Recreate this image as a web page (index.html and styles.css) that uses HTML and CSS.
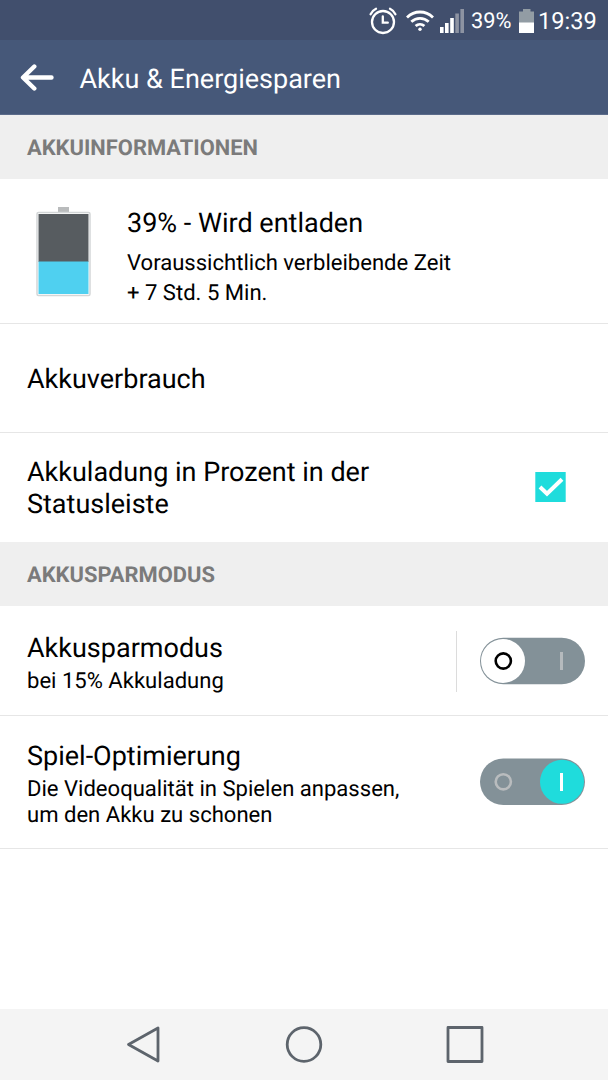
FILE: index.html
```html
<!DOCTYPE html>
<html lang="de">
<head>
    <meta charset="UTF-8">
    <meta name="viewport" content="width=device-width, initial-scale=1.0">
    <title>Akku &amp; Energiesparen</title>
    <link rel="stylesheet" href="styles.css">
</head>
<body>
    <div class="status-bar">
        <svg class="icon-alarm" width="28" height="28" viewBox="0 0 28 28" fill="none" stroke="#fff" stroke-width="2.3" stroke-linecap="round">
            <circle cx="14" cy="15" r="11"/>
            <path d="M13.8 9.5v6.2h5M1.6 7.2C2.8 4.8 4.6 2.9 7 1.8M21 1.8c2.4 1.1 4.2 3 5.4 5.4"/>
        </svg>
        <svg class="icon-wifi" width="28" height="22" viewBox="0 0 28 22" fill="none" stroke="#fff" stroke-width="2.8">
            <path d="M1 7.4C8.5.2 19.5.2 27 7.4M5.3 11.8c5-4.6 12.4-4.6 17.4 0M9.6 16c2.5-2.2 6.3-2.2 8.8 0"/>
            <circle cx="14" cy="19.3" r="1.7" fill="#fff" stroke="none"/>
        </svg>
        <svg class="icon-signal" width="24" height="24" viewBox="0 0 24 24" fill="#fff">
            <path d="M0 18h3.6v6H0zM5 14h3.6v10H5zM10.2 9h3.6v15h-3.6z"/>
            <path fill="#8d93a2" d="M15.3 4.5h3.6V24h-3.6zM20.4 0H24v24h-3.6z"/>
        </svg>
        <span class="percent">39%</span>
        <svg class="icon-battery" width="15" height="24" viewBox="0 0 15 24">
            <path fill="#929ca4" d="M4 0h7.5v2.500H15V14H0V2.500h4z"/>
            <path fill="#fff" d="M0 13.500h15V24H0z"/>
        </svg>
        <span class="clock">19:39</span>
    </div>

    <header class="header">
        <svg width="34" height="28" viewBox="0 0 34 28" fill="none" stroke="#fff" stroke-width="4.4" stroke-linecap="round" stroke-linejoin="round">
            <path d="M14.3 3.500L3 14.500l11.300 11M4 14.500h27.500"/>
        </svg>
        <h1>Akku &amp; Energiesparen</h1>
    </header>

    <main>
        <h2 class="section">AKKUINFORMATIONEN</h2>

        <div class="row row-battery">
            <svg width="56" height="90" viewBox="0 0 56 90">
                <path fill="#b9bbbc" d="M22 0h11v6H22z"/>
                <rect x="1" y="5.5" width="53" height="83" rx="1.5" fill="#fff" stroke="#d3d6d7" stroke-width="1.5"/>
                <path fill="#575c60" d="M2.5 7h50v48h-50z"/>
                <path fill="#4fd0f0" d="M2.5 54.500h50V87h-50z"/>
            </svg>
            <div class="text">
                <div class="title">39% - Wird entladen</div>
                <div class="summary">Voraussichtlich verbleibende Zeit<br>+ 7 Std. 5 Min.</div>
            </div>
        </div>

        <div class="row row-usage">
            <div class="title">Akkuverbrauch</div>
        </div>

        <div class="row row-percent">
            <div class="title">Akkuladung in Prozent in der<br>Statusleiste</div>
            <svg width="31" height="31" viewBox="0 0 31 31">
                <path fill="#1fdcdc" d="M.3 0h30.400v30H.3z"/>
                <path fill="none" stroke="#fff" stroke-width="4" d="M5 15l7 6.800L27 7.200"/>
            </svg>
        </div>

        <h2 class="section">AKKUSPARMODUS</h2>

        <div class="row row-saver">
            <div class="text">
                <div class="title">Akkusparmodus</div>
                <div class="summary">bei 15% Akkuladung</div>
            </div>
            <div class="divider"></div>
            <svg width="105" height="48" viewBox="0 0 105 48">
                <rect y=".7" width="105" height="46.6" rx="23.3" fill="#839198"/>
                <circle cx="23" cy="24" r="22" fill="#fff"/>
                <circle cx="23.3" cy="24" r="7.6" fill="none" stroke="#000" stroke-width="2.6"/>
                <path fill="#b5babd" d="M80 15h3v18h-3z"/>
            </svg>
        </div>

        <div class="row row-game">
            <div class="text">
                <div class="title">Spiel-Optimierung</div>
                <div class="summary">Die Videoqualität in Spielen anpassen,<br>um den Akku zu schonen</div>
            </div>
            <svg width="105" height="48" viewBox="0 0 105 48">
                <rect y=".5" width="105" height="46.6" rx="23.3" fill="#839198"/>
                <circle cx="82" cy="23.8" r="22" fill="#1fdcdc"/>
                <circle cx="23.3" cy="23.8" r="7.6" fill="none" stroke="#b9bcbe" stroke-width="2.6"/>
                <path fill="#fff" d="M80 15h3v18h-3z"/>
            </svg>
        </div>
    </main>

    <nav class="nav-bar">
        <svg width="36" height="38" viewBox="0 0 36 38"><path d="M2.5 19.500L32 3v33z"/></svg>
        <svg width="38" height="38" viewBox="0 0 38 38"><circle cx="19" cy="19.5" r="16.8"/></svg>
        <svg width="38" height="38" viewBox="0 0 38 38"><path d="M2 2.500h34v34H2z"/></svg>
    </nav>
</body>
</html>
```

FILE: styles.css
```css
body {
    margin: 0;
    height: 1080px;
    display: flex;
    flex-direction: column;
    font-family: Roboto, sans-serif;
    text-rendering: geometricPrecision;
    background: #fff;
    color: #000;
    white-space: nowrap;
    overflow: hidden;
}

svg {
    display: block;
    flex: none;
}

.status-bar {
    height: 40px;
    display: flex;
    align-items: center;
    box-sizing: border-box;
    padding: 1px 0 0 369px;
    background: #414f6d;
    color: #fff;
}

.icon-wifi {
    margin-left: 9px;
}

.icon-signal {
    margin: 0 7px 0 6px;
}

.percent {
    width: 40px;
    padding-top: 2px;
    font-size: 21.8px;
}

.clock {
    margin-left: 4px;
    padding-top: 1px;
    font-size: 23.6px;
}

.icon-battery {
    margin-left: 8px;
}

.header {
    height: 75px;
    display: flex;
    align-items: center;
    box-sizing: border-box;
    padding-left: 20px;
    border-bottom: 1px solid #5b6b8a;
    background: #465879;
    color: #fff;
}

h1 {
    margin: 3px 0 0 25.5px;
    font-size: 27px;
    font-weight: 400;
}

main {
    flex: 1;
}

.section {
    height: 64px;
    margin: 0;
    padding: 3px 0 0 27px;
    display: flex;
    align-items: center;
    box-sizing: border-box;
    background: #efefef;
    color: #7b7b7b;
    font-size: 21.9px;
    font-weight: 700;
}

.row {
    display: flex;
    align-items: center;
    box-sizing: border-box;
    height: 109px;
    padding-left: 27px;
    border-bottom: 1px solid #e6e6e6;
}

.title {
    font-size: 27px;
    line-height: 32px;
}

.summary {
    margin-top: 5px;
    font-size: 22.07px;
    line-height: 26px;
}

.row-battery {
    height: 145px;
    padding: 1px 0 0 36px;
}

.row-battery .text {
    margin: 13px 0 0 35px;
}

.row-battery .summary {
    margin-top: 10px;
    line-height: 30px;
}

.row-usage {
    padding-top: 2px;
}

.row-percent {
    justify-content: space-between;
    padding-right: 42px;
    border-bottom: none;
}

.row-percent .title {
    padding-top: 1px;
}

.row-saver,
.row-game {
    padding-right: 23px;
}

.row-saver {
    height: 110px;
    padding-top: 1px;
}

.row-game {
    height: 133px;
}

.row-saver .text,
.row-game .text {
    flex: 1;
    padding-top: 5px;
}

.divider {
    width: 1px;
    height: 61px;
    margin-right: 23px;
    background: #dcdcdc;
}

.nav-bar {
    height: 71px;
    display: flex;
    align-items: center;
    justify-content: space-between;
    box-sizing: border-box;
    padding: 0 124px 1px 126px;
    background: #f4f4f4;
}

.nav-bar svg {
    fill: none;
    stroke: #5d646c;
    stroke-width: 2.8;
    stroke-linejoin: round;
}
```
